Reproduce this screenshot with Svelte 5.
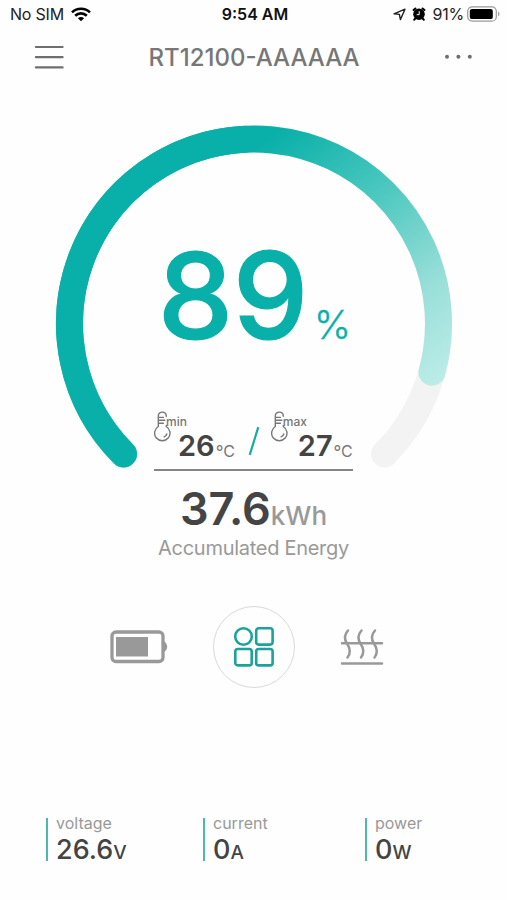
<script>
  let deviceName = 'RT12100-AAAAAA';
  let charge = 89;
  let energy = 37.6;

  const temps = [
    { label: 'min', value: 26 },
    { label: 'max', value: 27 }
  ];

  const stats = [
    { label: 'voltage', value: '26.6', unit: 'V' },
    { label: 'current', value: '0', unit: 'A' },
    { label: 'power', value: '0', unit: 'W' }
  ];

  // the dial is open at the bottom and covers 270 degrees
  const arc = percent => {
    const r = 184.5;
    const angle = ((135 + percent * 2.7) * Math.PI) / 180;
    const start = (135 * Math.PI) / 180;
    const x1 = 254 + r * Math.cos(start);
    const y1 = 237.5 + r * Math.sin(start);
    const x2 = 254 + r * Math.cos(angle);
    const y2 = 237.5 + r * Math.sin(angle);
    const large = percent * 2.7 > 180 ? 1 : 0;
    return `M${x1} ${y1} A${r} ${r} 0 ${large} 1 ${x2} ${y2}`;
  };
</script>

<main>
  <div class="status-bar">
    <div class="status-left">
      <span class="carrier">No SIM</span>
      <svg width="20" height="15" viewBox="0 0 20 15">
        <g fill="none" stroke="#000" stroke-width="2.6">
          <path d="M1 5.4C6 .5 14 .5 19 5.4" />
          <path d="M4.2 8.8c3.3-3.2 8.3-3.2 11.6 0" />
        </g>
        <path d="M10 14.3l-3.1-3.1c1.7-1.6 4.5-1.6 6.2 0z" />
      </svg>
    </div>
    <b class="clock">9:54 AM</b>
    <div class="status-right">
      <svg class="location" width="13" height="13" viewBox="0 0 13 13">
        <path d="M1 5.8L12 1.2 7.4 11.6 6.4 6.4z" fill="none" stroke="#222" stroke-width="1.4" stroke-linejoin="round" />
      </svg>
      <svg class="alarm" width="14" height="14" viewBox="0 0 14 14">
        <circle cx="7" cy="7.2" r="5.8" />
        <path d="M1.6 3L3.4 1.5M12.4 3L10.6 1.5M3.3 11.5L2.2 12.7M10.7 11.5l1.1 1.2" stroke="#000" stroke-width="2" stroke-linecap="round" />
        <path d="M7.2 4.2v3.5H4.7" fill="none" stroke="#fff" stroke-width="1" />
      </svg>
      <span class="percent">91%</span>
      <svg width="33" height="16" viewBox="0 0 33 16">
        <rect x=".7" y=".8" width="28.6" height="14.4" rx="4.5" fill="none" stroke="#999" stroke-width="1.2" />
        <rect x="2.8" y="2.9" width="23" height="10.2" rx="2.2" />
        <path d="M31 5.5c2 .8 2 4.2 0 5z" fill="#aaa" />
      </svg>
    </div>
  </div>

  <header>
    <button aria-label="Menu">
      <svg width="30" height="26" viewBox="0 0 30 26">
        <path d="M1.9 3h26.7M1.9 13.2h26.7M1.9 23.4h26.7" stroke="#6e6e6e" stroke-width="2.2" stroke-linecap="round" />
      </svg>
    </button>
    <h1>{deviceName}</h1>
    <button aria-label="More">
      <svg width="30" height="26" viewBox="0 0 30 26" fill="#6e6e6e">
        <circle cx="3" cy="12.8" r="2" />
        <circle cx="14.4" cy="12.8" r="2" />
        <circle cx="25.8" cy="12.8" r="2" />
      </svg>
    </button>
  </header>

  <section class="gauge">
    <svg class="dial" width="507" height="400" viewBox="0 0 507 400">
      <defs>
        <linearGradient id="fade" gradientUnits="userSpaceOnUse" x1="280" y1="45" x2="455" y2="285">
          <stop offset="0" stop-color="#09b0a9" />
          <stop offset=".38" stop-color="#4fc9c0" />
          <stop offset=".72" stop-color="#99dfd9" />
          <stop offset="1" stop-color="#bcece8" />
        </linearGradient>
      </defs>
      <g fill="none" stroke-width="27" stroke-linecap="round">
        <path d={arc(100)} stroke="#f3f3f3" />
        <path d={arc(charge)} stroke="url(#fade)" />
        <!-- the first half never fades -->
        <path d={arc(Math.min(charge, 49))} stroke="#09b0a9" />
      </g>
    </svg>

    <div class="readings">
      <div class="charge">
        <span class="charge-value">{charge}</span>
        <span class="charge-unit">%</span>
      </div>
      <div class="temps">
        {#each temps as temp, i}
          {#if i > 0}
            <svg class="slash" width="12" height="30" viewBox="0 0 12 30">
              <path d="M10.3 1.2L1.7 28.8" stroke="#16aaa2" stroke-width="2.2" />
            </svg>
          {/if}
          <div class="temp">
            <svg class="thermo" width="18" height="31" viewBox="0 0 18 31">
              <g fill="none" stroke="#777" stroke-width="1.4" stroke-linecap="round">
                <path d="M12.3 5.2C12.3-.3 4.3-.3 4.3 5.2V15.5A7.7 7.7 0 1 0 12.3 15.5V14.5" />
                <path d="M4.8 6.4h4.6M4.8 9.3h6M4.8 12.2h4.6M12.8 23c-.4 1.5-1.3 2.5-2.7 2.9" />
              </g>
            </svg>
            <span class="temp-label">{temp.label}</span>
            <span class="temp-value">{temp.value}</span>
            <span class="temp-unit"><i>°</i>C</span>
          </div>
        {/each}
      </div>
      <div class="energy">
        <span class="energy-value">{energy}</span><span class="energy-unit">kWh</span>
      </div>
      <p>Accumulated Energy</p>
    </div>
  </section>

  <nav>
    <button aria-label="Battery">
      <svg width="58" height="34" viewBox="0 0 58 34">
        <rect x="2" y="2" width="51" height="29.5" rx="4" fill="none" stroke="#999" stroke-width="3.3" />
        <rect x="6" y="7" width="32" height="19.5" fill="#999" />
        <path d="M54 11.5c4.2 2.5 4.2 8 0 10.5z" fill="#999" />
      </svg>
    </button>
    <button class="active" aria-label="Overview">
      <svg width="42" height="42" viewBox="0 0 42 42">
        <g fill="none" stroke="#1ba39b" stroke-width="2.6">
          <circle cx="10.5" cy="10.5" r="8.3" />
          <rect x="23.2" y="2.2" width="16.4" height="16.4" rx="2.5" />
          <rect x="2.3" y="23" width="16.4" height="16.4" rx="2.5" />
          <rect x="23.2" y="23" width="16.4" height="16.4" rx="2.5" />
        </g>
      </svg>
    </button>
    <button aria-label="Heating">
      <svg width="44" height="38" viewBox="0 0 44 38">
        <g fill="none" stroke="#999" stroke-width="2.5" stroke-linecap="round">
          <path d="M2 15.3h40M2 35.6h40" />
          <path d="M8 2.5C4 7 4 11 7 15.5S11 25 7.5 29.5" />
          <path d="M21.5 2.5C17.5 7 17.5 11 20.5 15.5S24.5 25 21 29.5" />
          <path d="M35 2.5C31 7 31 11 34 15.5S38 25 34.5 29.5" />
        </g>
      </svg>
    </button>
  </nav>

  <footer>
    {#each stats as stat}
      <div class="stat">
        <span class="stat-label">{stat.label}</span>
        <span class="stat-value">{stat.value}<small>{stat.unit}</small></span>
      </div>
    {/each}
  </footer>
</main>

<style>
  :global(body) {
    margin: 0;
    background: #fefefe;
  }

  main {
    width: 507px;
    height: 900px;
    overflow: hidden;
    font-family: Inter, 'Liberation Sans', sans-serif;
    color: #444;
  }

  button {
    display: flex;
    align-items: center;
    justify-content: center;
    padding: 0;
    border: 0;
    background: none;
    cursor: pointer;
  }

  svg {
    display: block;
    flex: none;
  }

  span {
    white-space: nowrap;
  }

  .status-bar {
    display: grid;
    grid-template-columns: 1fr auto 1fr;
    align-items: center;
    height: 28px;
    padding: 0 7px 0 10px;
    font-size: 16px;
    line-height: 28px;
    color: #222;
  }

  .status-left,
  .status-right {
    display: flex;
    align-items: center;
  }

  .status-left {
    gap: 7px;
    letter-spacing: -0.2px;
  }

  .status-right {
    justify-content: flex-end;
  }

  .clock {
    font-weight: 600;
    color: #111;
  }

  .location {
    margin-right: 6px;
  }

  .alarm {
    margin-right: 6px;
  }

  .percent {
    margin-right: 3px;
    letter-spacing: -0.2px;
  }

  header {
    display: flex;
    align-items: center;
    justify-content: space-between;
    height: 58px;
    padding: 0 33px 0 34px;
  }

  h1 {
    margin: 0;
    font-size: 24px;
    font-weight: 500;
    color: #777;
  }

  .gauge {
    display: grid;
    height: 520px;
  }

  .dial,
  .readings {
    grid-area: 1 / 1;
  }

  .readings {
    display: flex;
    flex-direction: column;
    align-items: center;
    padding-top: 165px;
  }

  .charge {
    display: flex;
    align-items: baseline;
    gap: 6px;
    height: 90px;
    line-height: 90px;
    color: #09b0a9;
  }

  .charge-value {
    font-size: 120px;
    font-weight: 500;
    letter-spacing: -0.5px;
    -webkit-text-stroke: 1.2px #09b0a9;
  }

  .charge-unit {
    font-size: 40px;
    font-weight: 300;
    letter-spacing: -2px;
    -webkit-text-stroke: 0.3px #09b0a9;
  }

  .temps {
    display: flex;
    width: 199px;
    height: 58px;
    margin-top: 70px;
    border-bottom: 2px solid #858585;
  }

  .temp {
    display: flex;
    line-height: 30px;
  }

  .thermo {
    width: 18px;
  }

  .temp-label {
    width: 0;
    margin-left: -6px;
    font-size: 12px;
    font-weight: 500;
    line-height: 22px;
    color: #777;
  }

  .temp-value {
    margin: 20px 0 0 12px;
    font-size: 29px;
    font-weight: 600;
  }

  .temp + .slash + .temp .temp-value {
    margin-left: 15px;
  }

  .temp-unit {
    display: flex;
    margin: 25px 0 0 1px;
    font-size: 16px;
    color: #777;
  }

  .temp-unit i {
    width: 7.5px;
    margin-top: 1px;
    font-size: 17px;
    font-style: normal;
  }

  .slash {
    margin: 15px 11px 0 13px;
  }

  .energy {
    display: flex;
    align-items: baseline;
    height: 46px;
    margin-top: 15px;
    line-height: 46px;
  }

  .energy-value {
    font-size: 45px;
    font-weight: 600;
  }

  .energy-unit {
    font-size: 26px;
    font-weight: 500;
    color: #999;
  }

  p {
    margin: 4px 0 0;
    font-size: 20px;
    line-height: 24px;
    letter-spacing: -0.28px;
    color: #999;
  }

  nav {
    display: flex;
    align-items: center;
    justify-content: space-between;
    height: 82px;
    padding: 0 123px 0 110px;
  }

  .active {
    width: 82px;
    height: 82px;
    box-sizing: border-box;
    border: 1px solid #d9d9d9;
    border-radius: 50%;
  }

  footer {
    display: grid;
    grid-template-columns: 157px 162px 1fr;
    padding: 130px 0 0 46px;
  }

  .stat {
    display: flex;
    flex-direction: column;
    height: 43px;
    padding-left: 8px;
    border-left: 2px solid #4cb8ae;
  }

  .stat-label {
    font-size: 16px;
    line-height: 11px;
    color: #999;
  }

  .stat-value {
    margin-top: 5px;
    font-size: 27px;
    font-weight: 500;
    line-height: 32px;
  }

  small {
    font-size: 19px;
  }
</style>
